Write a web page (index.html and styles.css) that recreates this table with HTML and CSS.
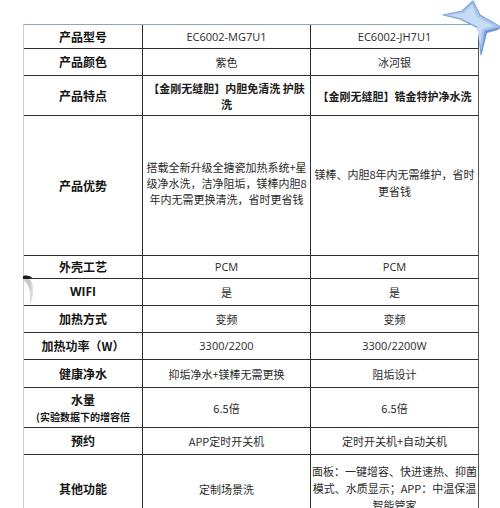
FILE: index.html
```html
<!DOCTYPE html>
<html lang="zh">
<head>
<meta charset="utf-8">
<link rel="stylesheet" href="styles.css">
</head>
<body>
<div class="page">
  <div class="spec">
    <div class="c h r1">产品型号</div><div class="c lat r1">EC6002-MG7U1</div><div class="c lat r1 last">EC6002-JH7U1</div>
    <div class="c h">产品颜色</div><div class="c">紫色</div><div class="c last">冰河银</div>
    <div class="c h">产品特点</div><div class="c feat">【金刚无缝胆】内胆免清洗 护肤<br>洗</div><div class="c feat last">【金刚无缝胆】锆金特护净水洗</div>
    <div class="c h">产品优势</div><div class="c multi">搭载全新升级全搪瓷加热系统+星<br>级净水洗，洁净阻垢，镁棒内胆8<br>年内无需更换清洗，省时更省钱</div><div class="c multi last">镁棒、内胆8年内无需维护，省时<br>更省钱</div>
    <div class="c h">外壳工艺</div><div class="c lat">PCM</div><div class="c lat last">PCM</div>
    <div class="c h lat-h">WIFI</div><div class="c">是</div><div class="c last">是</div>
    <div class="c h">加热方式</div><div class="c">变频</div><div class="c last">变频</div>
    <div class="c h">加热功率（W）</div><div class="c lat">3300/2200</div><div class="c lat last">3300/2200W</div>
    <div class="c h">健康净水</div><div class="c">抑垢净水+镁棒无需更换</div><div class="c last">阻垢设计</div>
    <div class="c h stack"><span>水量</span><span class="sub">(实验数据下的增容倍</span></div><div class="c">6.5倍</div><div class="c last">6.5倍</div>
    <div class="c h">预约</div><div class="c">APP定时开关机</div><div class="c last">定时开关机+自动关机</div>
    <div class="c h">其他功能</div><div class="c">定制场景洗</div><div class="c multi2 last">面板：一键增容、快进速热、抑菌<br>模式、水质显示；APP：中温保温<br>智能管家</div>
  </div>
  <svg class="star" width="60" height="60" viewBox="0 0 60 60">
    <polygon points="3,15 22,11 33,1 40,15 61,27 45,31 41,55 38,28 20,19" fill="#a9c7ee" stroke="#7ea6da" stroke-width="1.2" stroke-linejoin="round"/>
    <polygon points="9,15 24,13 32,5 37,17 54,26 42,29 40,46 37,26 21,18" fill="#c6dbf5"/>
    <polygon points="45,31 61,27 58,30 47,33 42,53 41,55" fill="#6f98d2"/>
  </svg>
  <svg class="moon" width="16" height="34" viewBox="0 0 16 34">
    <defs>
      <linearGradient id="mg" x1="0" y1="0" x2="1" y2="0">
        <stop offset="0" stop-color="#d9d9d9"/>
        <stop offset="0.6" stop-color="#c4c4c4"/>
        <stop offset="1" stop-color="#f2f2f2"/>
      </linearGradient>
    </defs>
    <path d="M0,2 C10,3 15,12 6,32 C9,20 7,8 0,6 Z" fill="url(#mg)"/>
    <path d="M0,1 C4,0 8,1 9,3 C6,4 3,4 0,4 Z" fill="#1a1a1a"/>
  </svg>
</div>
</body>
</html>
```
FILE: styles.css
```css
html, body {
  margin: 0;
  padding: 0;
  background: #ffffff;
}
.page {
  position: relative;
  width: 500px;
  height: 508px;
  overflow: hidden;
  padding: 24px 0 0 23px;
  box-sizing: border-box;
}
.spec {
  display: grid;
  grid-template-columns: 119px 168px 168px;
  grid-template-rows: 24px 27px 40px 140px 23px 27px 27px 27px 28px 40px 27px 68px;
  border-top: 1px solid #8ea3cb;
  border-left: 1px solid #cfcfcf;
  width: 455px;
  box-sizing: border-box;
  font-family: "Open Sans", "Noto Sans CJK SC", sans-serif;
  font-size: 11px;
  color: #2a2a2a;
  background: #fff;
}
.c {
  display: flex;
  align-items: center;
  justify-content: center;
  text-align: center;
  border-right: 1px solid #2e2e2e;
  border-bottom: 1px solid #2e2e2e;
  line-height: 16px;
  font-family: "Noto Sans CJK SC", sans-serif;
}
.c.last {
  border-right-color: #555;
}
.c.lat {
  font-family: "Open Sans", "Noto Sans CJK SC", sans-serif;
}
.c.h {
  font-size: 12px;
  font-weight: 700;
  color: #141414;
}
.c.lat-h {
  font-family: "Open Sans", sans-serif;
  font-size: 12px;
}
.c.r1 {
  padding-top: 0;
}
.feat {
  font-weight: 700;
  color: #1c1c1c;
}
.multi {
  line-height: 16px;
  padding-bottom: 6px;
}
.multi.last {
  line-height: 17px;
}
.multi2 {
  line-height: 17px;
  align-items: flex-start;
  padding-top: 8px;
  box-sizing: border-box;
}
.stack {
  flex-direction: column;
  line-height: 18px;
}
.stack .sub {
  font-size: 10px;
  line-height: 16px;
}
.star {
  position: absolute;
  left: 440px;
  top: 0;
}
.moon {
  position: absolute;
  left: 23px;
  top: 275px;
}
```
